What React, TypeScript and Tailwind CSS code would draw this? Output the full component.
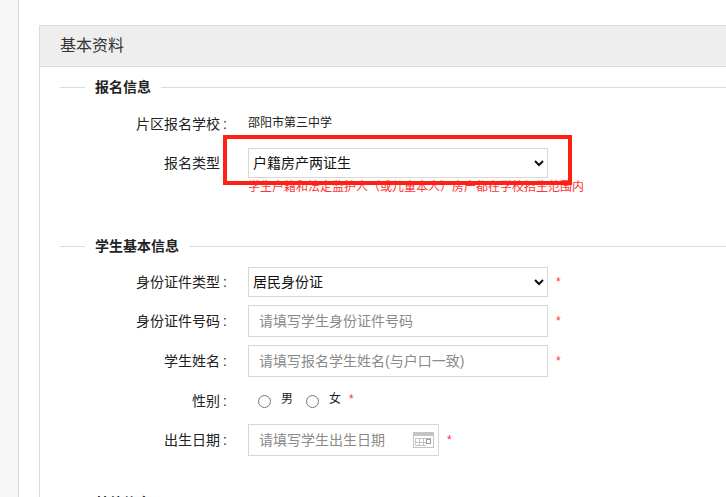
const SANS = "font-['Liberation_Sans','Noto_Sans_CJK_SC',sans-serif]";

function Legend({ children, className }: { children: string; className: string }) {
  return (
    <div className={`flex items-center ${className}`}>
      <div className="h-px w-[25px] bg-[#dcdcdc]" />
      <div className="px-[10px] text-[14px] leading-[20px] font-bold text-[#222]">{children}</div>
      <div className="h-px flex-1 bg-[#dcdcdc]" />
    </div>
  );
}

function Row({ label, colon = true, className, children }: { label: string; colon?: boolean; className: string; children: React.ReactNode }) {
  return (
    <div className={`flex items-center ${className}`}>
      <div className="flex w-[187px] justify-end text-[14px] leading-[20px] text-[#222]">
        <span>{label}</span>
        <span className="w-[7px] pl-[3px]">{colon ? ":" : ""}</span>
      </div>
      <div className="ml-[21px] flex items-center">{children}</div>
    </div>
  );
}

function Star({ className = "ml-[8px]" }: { className?: string }) {
  return <span className={`text-[12px] leading-[12px] text-[#f33] ${className}`}>*</span>;
}

function Select({ value, h }: { value: string; h: string }) {
  return (
    <select defaultValue={value} className={`${h} w-[300px] appearance-auto rounded-none border border-[#d7d7d7] bg-white text-[14px] text-[#111]`}>
      <option>{value}</option>
    </select>
  );
}

function Input({ placeholder, width = "w-[300px]", children }: { placeholder: string; width?: string; children?: React.ReactNode }) {
  return (
    <div className={`relative h-[32px] ${width}`}>
      <input
        placeholder={placeholder}
        className="h-full w-full border border-[#d7d7d7] bg-white pl-[10px] text-[14px] outline-none placeholder:text-[#8a8a8a]"
      />
      {children}
    </div>
  );
}

function Radio({ label }: { label: string }) {
  return (
    <div className="flex items-center">
      <span className="h-[13px] w-[13px] rounded-full border border-[#767676] bg-white" />
      <span className="ml-[10px] -translate-y-[2px] text-[12px] leading-[16px] text-[#222]">{label}</span>
    </div>
  );
}

export default function App() {
  return (
    <div className={`flex h-[497px] w-[726px] overflow-hidden bg-white ${SANS}`}>
      <div className="h-full w-[19px] shrink-0 border-r border-[#dcdcdc] bg-[#f7f7f7]" />
      <div className="min-w-0 flex-1 pl-[20px] pt-[25px]">
        <div className="h-[600px] border-l border-t border-[#dcdcdc]">
          <div className="flex h-[41px] items-center border-b border-[#dcdcdc] bg-[#eeeeee] pl-[20px] text-[16px] text-[#333]">
            基本资料
          </div>
          <Legend className="ml-[20px] mt-[10px]">报名信息</Legend>
          <Row label="片区报名学校" className="mt-[17px] h-[20px]">
            <span className="-translate-y-[1px] text-[12px] leading-[16px] text-[#222]">邵阳市第三中学</span>
          </Row>
          <div className="relative mt-[14px]">
            <Row label="报名类型" colon={false} className="">
              <Select value="户籍房产两证生" h="h-[30px]" />
            </Row>
            <div className="absolute left-[208px] top-[31px] text-[12px] leading-[16px] text-[#f33]">
              学生户籍和法定监护人（或儿童本人）房产都在学校招生范围内
            </div>
            <div className="absolute left-[183px] top-[-13px] h-[50px] w-[349px] border-[4px] border-[#ff2015]" />
          </div>
          <Legend className="ml-[20px] mt-[58px]">学生基本信息</Legend>
          <Row label="身份证件类型" className="mt-[11px]">
            <Select value="居民身份证" h="h-[30px]" />
            <Star />
          </Row>
          <Row label="身份证件号码" className="mt-[8px]">
            <Input placeholder="请填写学生身份证件号码" />
            <Star />
          </Row>
          <Row label="学生姓名" className="mt-[8px]">
            <Input placeholder="请填写报名学生姓名(与户口一致)" />
            <Star />
          </Row>
          <Row label="性别" className="mt-[14px] h-[20px]">
            <div className="ml-[10px] flex items-center gap-[13px]">
              <Radio label="男" />
              <Radio label="女" />
            </div>
            <Star className="ml-[8px] -translate-y-[2px]" />
          </Row>
          <Row label="出生日期" className="mt-[13px]">
            <Input placeholder="请填写学生出生日期" width="w-[191px]">
              <svg className="absolute left-[165px] top-[8px]" width="21" height="16" viewBox="0 0 21 16">
                <rect x="0.5" y="0.5" width="20" height="15" fill="#fff" stroke="#c4c4c4" />
                <rect x="0" y="0" width="21" height="4" fill="#c4c4c4" />
                <path d="M2.5 6.5H18.5M2.5 10.5H13M6.5 6.5V13.5M10.5 6.5V13.5M2.5 13.5H13M2.5 6.5V13.5" stroke="#c4c4c4" fill="none" />
                <rect x="13.5" y="7.5" width="4" height="4" fill="none" stroke="#9a9a9a" />
              </svg>
            </Input>
            <Star className="ml-[8px]" />
          </Row>
          <Legend className="ml-[20px] mt-[37px]">其他信息</Legend>
        </div>
      </div>
    </div>
  );
}
